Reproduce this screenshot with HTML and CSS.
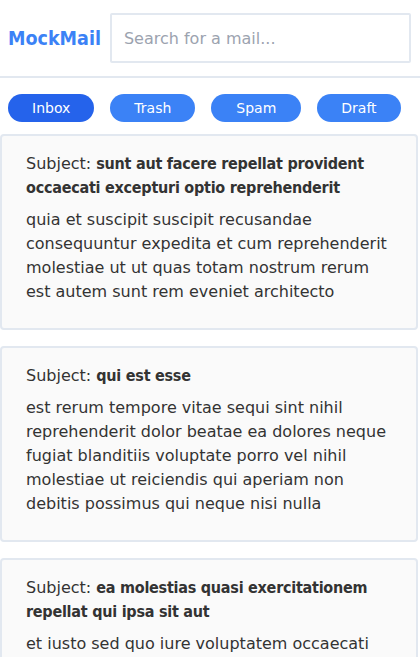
FILE: index.html
```html
<!DOCTYPE html>
<html lang="en">
<head>
<meta charset="utf-8">
<title>MockMail</title>
<link rel="stylesheet" href="styles.css">
</head>
<body>
<header class="topbar">
  <div class="logo">MockMail</div>
  <input class="search" type="text" placeholder="Search for a mail...">
</header>
<nav class="tabs">
  <button class="tab active">Inbox</button>
  <button class="tab">Trash</button>
  <button class="tab wide">Spam</button>
  <button class="tab">Draft</button>
</nav>
<main class="mails">
  <article class="mail">
    <h3 class="subject">Subject: <strong>sunt aut facere repellat provident occaecati excepturi optio reprehenderit</strong></h3>
    <p class="body">quia et suscipit suscipit recusandae consequuntur expedita et cum reprehenderit molestiae ut ut quas totam nostrum rerum est autem sunt rem eveniet architecto</p>
  </article>
  <article class="mail">
    <h3 class="subject">Subject: <strong>qui est esse</strong></h3>
    <p class="body">est rerum tempore vitae sequi sint nihil reprehenderit dolor beatae ea dolores neque fugiat blanditiis voluptate porro vel nihil molestiae ut reiciendis qui aperiam non debitis possimus qui neque nisi nulla</p>
  </article>
  <article class="mail">
    <h3 class="subject">Subject: <strong>ea molestias quasi exercitationem repellat qui ipsa sit aut</strong></h3>
    <p class="body">et iusto sed quo iure voluptatem occaecati omnis eligendi aut ad voluptatem doloribus vel accusantium quis pariatur molestiae porro eius odio et labore et velit aut</p>
  </article>
</main>
</body>
</html>
```
FILE: styles.css
```css
* { box-sizing: border-box; }
body {
  margin: 0;
  font-family: "DejaVu Sans", sans-serif;
  color: #333333;
  background: #ffffff;
}
.topbar {
  display: flex;
  align-items: center;
  gap: 9px;
  padding: 13px 9px 13px 8px;
  border-bottom: 2px solid #e2e8f0;
}
.logo {
  font-family: "DejaVu Sans Condensed", "DejaVu Sans", sans-serif;
  font-size: 19.5px;
  font-weight: 700;
  color: #3b82f6;
  white-space: nowrap;
}
.search {
  flex: 1;
  min-width: 0;
  height: 50px;
  border: 2px solid #e2e8f0;
  border-radius: 2px;
  padding: 0 12px;
  font-family: "DejaVu Sans", sans-serif;
  font-size: 16px;
  color: #333;
  outline: none;
}
.search::placeholder { color: #9ca3af; }
.tabs {
  display: flex;
  gap: 16px;
  padding: 16px 8px 12px;
}
.tab {
  height: 28px;
  padding: 0 24px;
  border: none;
  border-radius: 9999px;
  background: #3b82f6;
  color: #ffffff;
  font-family: "DejaVu Sans", sans-serif;
  font-size: 14px;
}
.tab.wide { padding: 0 25px; }
.tab.active { background: #2563eb; }
.mails {
  display: flex;
  flex-direction: column;
  gap: 16px;
  padding-right: 2px;
}
.mail {
  background: #fafafa;
  border: 2px solid #e2e8f0;
  border-radius: 4px;
  padding: 16px 24px 24px;
}
.subject {
  margin: 0 0 8px;
  font-size: 16px;
  line-height: 24px;
  font-weight: 400;
  color: #333;
}
.subject strong {
  font-family: "DejaVu Sans Condensed", "DejaVu Sans", sans-serif;
  font-weight: 700;
  letter-spacing: -0.25px;
}
.body {
  margin: 0;
  font-size: 16px;
  line-height: 24px;
  color: #333;
}
```
